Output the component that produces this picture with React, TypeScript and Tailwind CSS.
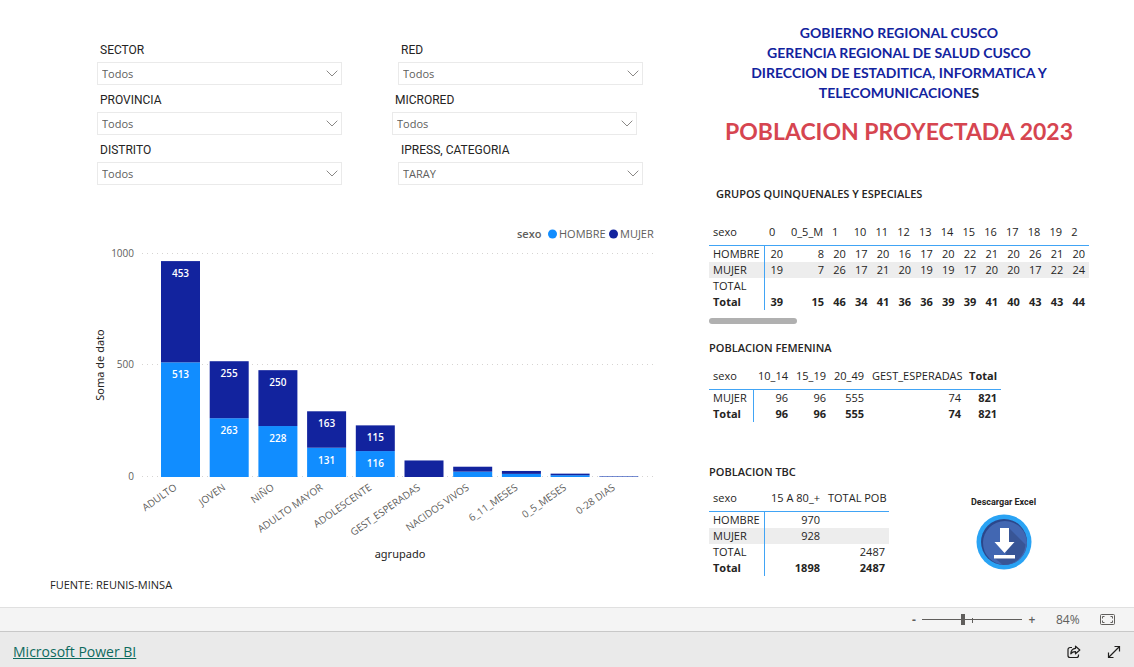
import React, { useState } from 'react';

type Row = { label: string; values: string[]; bold?: boolean; striped?: boolean };

const filters = [
  { id: 'sector', label: 'SECTOR', value: 'Todos', className: '' },
  { id: 'red', label: 'RED', value: 'Todos', className: 'pl-1.5' },
  { id: 'provincia', label: 'PROVINCIA', value: 'Todos', className: '' },
  { id: 'microred', label: 'MICRORED', value: 'Todos', className: 'pr-1.5' },
  { id: 'distrito', label: 'DISTRITO', value: 'Todos', className: '' },
  { id: 'ipress', label: 'IPRESS, CATEGORIA', value: 'TARAY', className: 'pl-1.5' },
];

const groups = [
  { name: 'ADULTO', hombre: 513, mujer: 453 },
  { name: 'JOVEN', hombre: 263, mujer: 255 },
  { name: 'NIÑO', hombre: 228, mujer: 250 },
  { name: 'ADULTO MAYOR', hombre: 131, mujer: 163 },
  { name: 'ADOLESCENTE', hombre: 116, mujer: 115 },
  { name: 'GEST_ESPERADAS', hombre: 0, mujer: 74 },
  { name: 'NACIDOS VIVOS', hombre: 24, mujer: 22 },
  { name: '6_11_MESES', hombre: 14, mujer: 13 },
  { name: '0_5_MESES', hombre: 8, mujer: 7 },
  { name: '0-28 DIAS', hombre: 1, mujer: 2 },
];

const quinquenales: Row[] = [
  { label: 'HOMBRE', values: ['20', '8', '20', '17', '20', '16', '17', '20', '22', '21', '20', '26', '21', '20'] },
  { label: 'MUJER', values: ['19', '7', '26', '17', '21', '20', '19', '19', '17', '20', '20', '17', '22', '24'], striped: true },
  { label: 'TOTAL', values: ['', '', '', '', '', '', '', '', '', '', '', '', '', ''] },
  { label: 'Total', values: ['39', '15', '46', '34', '41', '36', '36', '39', '39', '41', '40', '43', '43', '44'], bold: true },
];

const femenina: Row[] = [
  { label: 'MUJER', values: ['96', '96', '555', '74', '821'] },
  { label: 'Total', values: ['96', '96', '555', '74', '821'], bold: true },
];

const tbc: Row[] = [
  { label: 'HOMBRE', values: ['970', ''] },
  { label: 'MUJER', values: ['928', ''], striped: true },
  { label: 'TOTAL', values: ['', '2487'] },
  { label: 'Total', values: ['1898', '2487'], bold: true },
];

const Filter = ({ id, label, value, className }: { id: string; label: string; value: string; className: string }) => (
  <div className={`flex flex-col gap-1 ${className}`}>
    <label htmlFor={id} className="pl-[3px] font-[Roboto,sans-serif] text-[12px] leading-4 text-[#252423]">
      {label}
    </label>
    <div className="relative">
      <select
        id={id}
        defaultValue={value}
        className="block h-[23px] w-full appearance-none border border-[#eaeaea] bg-white pl-1 text-[11px] leading-4 text-[#605e5c]"
      >
        <option value={value}>{value}</option>
      </select>
      <svg className="pointer-events-none absolute top-2 right-1 h-[7px] w-3" viewBox="0 0 12 7" fill="none" stroke="#8a8886">
        <path d="M.7.7 6 6 11.3.7" />
      </svg>
    </div>
  </div>
);

const Matrix = ({
  headers,
  widths,
  rows,
  align = 'text-right',
  totalColumn = false,
  className,
}: {
  headers: string[];
  widths: string[];
  rows: Row[];
  align?: string;
  totalColumn?: boolean;
  className: string;
}) => (
  <table className={`table-fixed border-separate border-spacing-0 text-[11px] leading-4 text-[#252423] ${className}`}>
    <colgroup>
      {widths.map((w, i) => (
        <col key={i} className={w} />
      ))}
    </colgroup>
    <thead>
      <tr className="h-7">
        <th scope="col" className="border-b border-[#41a4f5] pl-1 text-left font-normal">sexo</th>
        {headers.map((h, i) => (
          <th
            key={h}
            scope="col"
            className={`border-b border-[#41a4f5] px-1 whitespace-nowrap ${align} ${totalColumn && i === headers.length - 1 ? 'font-bold' : 'font-normal'}`}
          >
            {h}
          </th>
        ))}
      </tr>
    </thead>
    <tbody>
      {rows.map((row) => (
        <tr key={row.label} className={`h-4 ${row.striped ? 'bg-[#ededed]' : ''} ${row.bold ? 'font-bold' : ''}`}>
          <th scope="row" className={`border-r border-[#41a4f5] pl-1 text-left ${row.bold ? 'font-bold' : 'font-normal'}`}>
            {row.label}
          </th>
          {row.values.map((v, i) => (
            <td key={i} className={`pr-1 text-right ${totalColumn && i === row.values.length - 1 ? 'font-bold' : ''}`}>
              {v}
            </td>
          ))}
        </tr>
      ))}
    </tbody>
  </table>
);

// Chart geometry, in viewBox units
const BASE = 256;
const SCALE = 0.2235;
const FIRST = 71;
const STEP = 48.7;
const BAR = 39;

const Chart = () => (
  <svg viewBox="0 0 580 348" className="block w-full" role="img" aria-label="Soma de dato por agrupado y sexo">
    {/* Legend */}
    <g fontSize="11" fill="#605e5c">
      <text x="427" y="17" fontWeight="600">sexo</text>
      <circle cx="462.500" cy="13" r="4.500" fill="#118dff" />
      <text x="469" y="17">HOMBRE</text>
      <circle cx="523.500" cy="13" r="4.500" fill="#12239e" />
      <text x="530" y="17">MUJER</text>
    </g>

    {/* Axis */}
    {[0, 500, 1000].map((tick) => (
      <g key={tick}>
        <line
          x1="52"
          x2="565"
          y1={Math.round(BASE - tick * SCALE) - 0.5}
          y2={Math.round(BASE - tick * SCALE) - 0.5}
          stroke="#d6d4d2"
          strokeDasharray="1 4"
        />
        <text x="44" y={BASE - tick * SCALE + 3} textAnchor="end" fontSize="10" fill="#605e5c">
          {tick}
        </text>
      </g>
    ))}

    {groups.map((g, i) => {
      const x = FIRST + i * STEP;
      const hombre = g.hombre * SCALE;
      const mujer = g.mujer * SCALE;
      const cx = x + BAR / 2;
      return (
        <g key={g.name}>
          <rect x={x} y={BASE - hombre} width={BAR} height={hombre} fill="#118dff" />
          <rect x={x} y={BASE - hombre - mujer} width={BAR} height={mujer} fill="#12239e" />
          {g.hombre > 100 && (
            <g fontSize="10" fontWeight="600" fill="#fff" textAnchor="middle">
              <text x={cx} y={BASE - hombre + 16}>{g.hombre}</text>
              <text x={cx} y={BASE - hombre - mujer + 16}>{g.mujer}</text>
            </g>
          )}
          <text
            transform={`translate(${cx - 3} ${BASE + 12}) rotate(-35)`}
            textAnchor="end"
            fontSize="10"
            fill="#605e5c"
          >
            {g.name}
          </text>
        </g>
      );
    })}

    <g fontFamily="'Noto Sans', sans-serif" fontSize="11" fill="#252423" textAnchor="middle">
      <text transform="translate(14 144) rotate(-90)">Soma de dato</text>
      <text x="310" y="337">agrupado</text>
    </g>
  </svg>
);

const DownloadIcon = () => (
  <svg viewBox="0 0 56 56" className="size-14">
    <circle cx="28" cy="28" r="27.500" fill="#2aa3f4" />
    <circle cx="28" cy="28" r="23" fill="#2b478b" />
    <circle cx="29" cy="29" r="22" fill="#4267b2" />
    <path d="M33 14 49.500 30.500A22 22 0 0 1 27 51L18 43.500 30 41z" fill="#385596" />
    <path d="M24 14h9v14h5.500L28.500 39 18.500 28H24z" fill="#fff" />
    <path d="M18 41h21v3.500H18z" fill="#fff" />
  </svg>
);

const App = () => {
  const [zoom, setZoom] = useState(84);

  return (
    <div className="flex min-h-screen flex-col bg-white font-['Open_Sans',sans-serif]">
      <main className="grid flex-1 grid-cols-[700fr_434fr]">
        {/* Filters and chart */}
        <section className="pt-[42px]">
          <div className="grid grid-cols-[245fr_251fr] gap-x-[50px] gap-y-[7px] pr-[57px] pl-[97px]">
            {filters.map((f) => (
              <Filter key={f.id} {...f} />
            ))}
          </div>
          <div className="mt-9 pr-[30px] pl-[90px]">
            <Chart />
          </div>
          <p className="mt-2 pl-[50px] text-[11px] leading-4 text-[#252423]">FUENTE: REUNIS-MINSA</p>
        </section>

        {/* Titles and tables */}
        <section className="pt-[23px] pr-[45px] pl-[9px] text-[#252423]">
          <h2 className="text-center font-[Lato,sans-serif] text-[14px] leading-5 font-bold text-[#12239e]">
            GOBIERNO REGIONAL CUSCO
            <br />
            GERENCIA REGIONAL DE SALUD CUSCO
            <br />
            DIRECCION DE ESTADITICA, INFORMATICA Y
            <br />
            TELECOMUNICACIONE<span className="text-[#252423]">S</span>
          </h2>
          <h1 className="mt-3 text-center font-[Lato,sans-serif] text-[23px] leading-8 font-bold text-[#d64550]">
            POBLACION PROYECTADA 2023
          </h1>

          <h3 className="mt-[39px] pl-[7px] text-[11px] leading-4 font-semibold">GRUPOS QUINQUENALES Y ESPECIALES</h3>
          <Matrix
            className="mt-4 w-full"
            headers={['0', '0_5_M', '1', '10', '11', '12', '13', '14', '15', '16', '17', '18', '19', '2']}
            widths={['w-14', 'w-[22px]', 'w-[41px]', '', '', '', '', '', '', '', '', '', '', '', '']}
            rows={quinquenales}
            align="text-left"
          />
          <div className="mt-2 h-1.5 w-[88px] rounded-full bg-[#b0b0b0]" />

          <h3 className="mt-4 text-[11px] leading-4 font-semibold">POBLACION FEMENINA</h3>
          <Matrix
            className="mt-1.5 w-[292px]"
            headers={['10_14', '15_19', '20_49', 'GEST_ESPERADAS', 'Total']}
            widths={['w-[45px]', 'w-[38px]', 'w-[38px]', 'w-[38px]', 'w-[97px]', 'w-9']}
            rows={femenina}
            totalColumn
          />

          <div className="mt-[42px] flex items-end gap-[82px]">
            <div>
              <h3 className="text-[11px] leading-4 font-semibold">POBLACION TBC</h3>
              <Matrix
                className="mt-1 w-[180px]"
                headers={['15 A 80_+', 'TOTAL POB']}
                widths={['w-14', 'w-[59px]', 'w-[65px]']}
                rows={tbc}
              />
            </div>
            <button className="mb-1.5 flex flex-col items-center gap-1 font-[Roboto,sans-serif] text-[9px] leading-4 font-bold">
              Descargar Excel
              <DownloadIcon />
            </button>
          </div>
        </section>
      </main>

      {/* Zoom bar */}
      <div className="flex h-6 items-center justify-end border-t border-[#e0e0e0] bg-[#f4f4f4] pr-[19px] text-[12px] leading-4 text-[#605e5c]">
        <button aria-label="Alejar" className="w-4 text-center font-bold" onClick={() => setZoom(Math.max(10, zoom - 10))}>
          -
        </button>
        <div className="relative flex h-4 w-[100px] items-center">
          <span className="absolute top-1.5 left-1/2 h-[5px] w-px bg-[#605e5c]" />
          <input
            type="range"
            aria-label="Zoom"
            min={10}
            max={190}
            value={zoom}
            onChange={(e) => setZoom(Number(e.target.value))}
            className="relative h-px w-full appearance-none bg-[#605e5c] [&::-webkit-slider-thumb]:h-[11px] [&::-webkit-slider-thumb]:w-1 [&::-webkit-slider-thumb]:appearance-none [&::-webkit-slider-thumb]:bg-[#605e5c]"
          />
        </div>
        <button aria-label="Acercar" className="w-5 text-center font-semibold" onClick={() => setZoom(Math.min(190, zoom + 10))}>
          +
        </button>
        <span className="w-12 pl-3.5">{zoom}%</span>
        <button aria-label="Ajustar a la página" className="ml-2.5">
          <svg viewBox="0 0 15 11" className="h-[11px] w-[15px]" fill="none" stroke="#605e5c">
            <rect x=".5" y=".5" width="14" height="10" rx="1" />
            <path d="M4.500 2.500h-2v2M2.500 6.500v2h2M10.500 2.500h2v2M12.500 6.500v2h-2" />
          </svg>
        </button>
      </div>

      <footer className="flex h-9 items-center justify-between border-t border-[#c8c8c8] bg-[#eaeaea] pt-1 pr-[13px] pl-[13px]">
        <a href="#" className="text-[14px] leading-5 text-[#0d6a5e] underline">
          Microsoft Power BI
        </a>
        <div className="flex items-center gap-[26px]">
          <button aria-label="Compartir">
            <svg viewBox="0 0 14 14" className="size-3.5" fill="none" stroke="#201f1e" strokeWidth="1.2" strokeLinejoin="round">
              <path d="M5 2.500H3a2 2 0 0 0-2 2v6a2 2 0 0 0 2 2h6.500a2 2 0 0 0 2-2V9.500" />
              <path d="M8.500 1.200 12.800 5 8.500 8.800V6.600C6.500 6.500 5 7.200 3.800 8.800 4 5.500 5.800 3.600 8.500 3.400z" />
            </svg>
          </button>
          <button aria-label="Pantalla completa">
            <svg viewBox="0 0 14 14" className="size-3.5" fill="none" stroke="#201f1e" strokeWidth="1.2">
              <path d="M1.500 12.500 12.500 1.500M7.500 1.500h5v5M1.500 7.500v5h5" />
            </svg>
          </button>
        </div>
      </footer>
    </div>
  );
};

export default App;
